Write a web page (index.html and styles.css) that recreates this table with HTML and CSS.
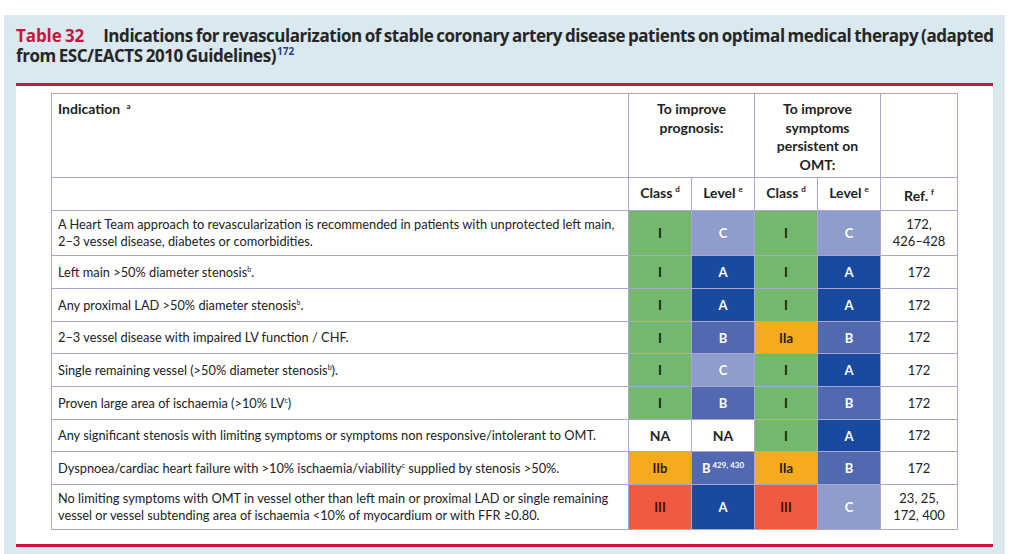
FILE: index.html
```html
<!DOCTYPE html>
<html>
<head>
<meta charset="utf-8">
<link rel="stylesheet" href="styles.css">
</head>
<body>
<div class="panel">
  <h1 class="title"><span class="tno">Table 32</span><span class="ttext">Indications for revascularization of stable coronary artery disease patients on optimal medical therapy (adapted<br>from ESC/EACTS 2010 Guidelines)<sup class="tref">172</sup></span></h1>
  <div class="rule"></div>
  <div class="box">
    <table class="tbl">
      <colgroup>
        <col class="c-ind"><col class="c-x"><col class="c-x"><col class="c-x"><col class="c-x"><col class="c-ref">
      </colgroup>
      <tr class="h1">
        <th class="ind">Indication <sup>a</sup></th>
        <th colspan="2" class="grp">To improve prognosis:</th>
        <th colspan="2" class="grp">To improve symptoms persistent on OMT:</th>
        <th></th>
      </tr>
      <tr class="h2">
        <th></th>
        <th class="sub">Class<sup>d</sup></th>
        <th class="sub">Level<sup>e</sup></th>
        <th class="sub">Class<sup>d</sup></th>
        <th class="sub">Level<sup>e</sup></th>
        <th class="sub refh">Ref.<sup>f</sup></th>
      </tr>
      <tr class="tall">
        <td class="txt">A Heart Team approach to revascularization is recommended in patients with unprotected left main,<br>2–3 vessel disease, diabetes or comorbidities.</td>
        <td class="k g">I</td><td class="k lc">C</td><td class="k g">I</td><td class="k lc">C</td><td class="ref">172,<br>426–428</td>
      </tr>
      <tr>
        <td class="txt">Left main &gt;50% diameter stenosis<sup>b</sup>.</td>
        <td class="k g">I</td><td class="k la">A</td><td class="k g">I</td><td class="k la">A</td><td class="ref">172</td>
      </tr>
      <tr>
        <td class="txt">Any proximal LAD &gt;50% diameter stenosis<sup>b</sup>.</td>
        <td class="k g">I</td><td class="k la">A</td><td class="k g">I</td><td class="k la">A</td><td class="ref">172</td>
      </tr>
      <tr class="short">
        <td class="txt">2–3 vessel disease with impaired LV function / CHF.</td>
        <td class="k g">I</td><td class="k lb">B</td><td class="k o">IIa</td><td class="k lb">B</td><td class="ref">172</td>
      </tr>
      <tr>
        <td class="txt">Single remaining vessel (&gt;50% diameter stenosis<sup>b</sup>).</td>
        <td class="k g">I</td><td class="k lc">C</td><td class="k g">I</td><td class="k la">A</td><td class="ref">172</td>
      </tr>
      <tr>
        <td class="txt">Proven large area of ischaemia (&gt;10% LV<sup>c</sup>)</td>
        <td class="k g">I</td><td class="k lb">B</td><td class="k g">I</td><td class="k lb">B</td><td class="ref">172</td>
      </tr>
      <tr class="short">
        <td class="txt">Any significant stenosis with limiting symptoms or symptoms non responsive/intolerant to OMT.</td>
        <td class="k na">NA</td><td class="k na">NA</td><td class="k g">I</td><td class="k la">A</td><td class="ref">172</td>
      </tr>
      <tr>
        <td class="txt">Dyspnoea/cardiac heart failure with &gt;10% ischaemia/viability<sup>c</sup> supplied by stenosis &gt;50%.</td>
        <td class="k o">IIb</td><td class="k lb">B<sup class="lsup">429, 430</sup></td><td class="k o">IIa</td><td class="k lb">B</td><td class="ref">172</td>
      </tr>
      <tr class="tall">
        <td class="txt">No limiting symptoms with OMT in vessel other than left main or proximal LAD or single remaining<br>vessel or vessel subtending area of ischaemia &lt;10% of myocardium or with FFR ≥0.80.</td>
        <td class="k r">III</td><td class="k la">A</td><td class="k r">III</td><td class="k lc">C</td><td class="ref">23, 25,<br>172, 400</td>
      </tr>
    </table>
  </div>
  <div class="rule"></div>
  <div class="foot"></div>
</div>
</body>
</html>
```

FILE: styles.css
```css
html, body {
  margin: 0;
  padding: 0;
  background: #ffffff;
}
body {
  font-family: Lato, "Open Sans", "Liberation Sans", sans-serif;
  color: #1f1f1f;
}
.panel {
  margin: 15px 0 0 4px;
  width: 977px;
  padding: 0 12px;
  background: #d9e9ef;
  height: 539px;
  display: flex;
  flex-direction: column;
}
.title {
  margin: 0;
  padding: 11px 0 0 0;
  height: 68px;
  box-sizing: border-box;
  font-family: "Open Sans", Lato, sans-serif;
  font-weight: 700;
  font-size: 17px;
  line-height: 20px;
  letter-spacing: -0.45px;
  word-spacing: -1px;
  white-space: nowrap;
  color: #262626;
}
.tno {
  color: #c5163f;
  margin-right: 19px;
  letter-spacing: -0.1px;
}
.tref {
  color: #2d3a8c;
  font-size: 10px;
  vertical-align: 7px;
  line-height: 0;
  letter-spacing: 0;
  margin-left: 1px;
}
.rule {
  height: 3px;
  background: #c6183f;
}
.box {
  background: #ffffff;
  padding: 7px 0 14px 35px;
}
.tbl {
  border-collapse: collapse;
  width: 906px;
  table-layout: fixed;
  font-size: 13px;
}
.c-ind { width: 577px; }
.c-x { width: 63px; }
.c-ref { width: 77px; }
.tbl th, .tbl td {
  border: 1px solid #a9a7d0;
  padding: 0;
}
.tbl th {
  font-weight: 700;
  font-size: 14px;
  color: #222;
  vertical-align: top;
}
.tbl tr { height: 33px; }
.tbl tr.h1 { height: 84px; }
.tbl tr.h2 { height: 33px; }
.tbl tr.tall { height: 45px; }
.tbl tr.short { height: 32px; }
.h1 th { padding-top: 6px; line-height: 18.5px; }
.ind {
  text-align: left;
  padding-left: 6px !important;
}
.ind sup {
  font-size: 8px;
  vertical-align: 5px;
  line-height: 0;
  margin-left: 3px;
}
.grp {
  text-align: center;
  padding-left: 17px !important;
  padding-right: 17px !important;
}
.sub {
  text-align: center;
  padding-top: 6px !important;
  line-height: 18px;
}
.sub sup {
  font-size: 8px;
  vertical-align: 6px;
  line-height: 0;
  margin-left: 3px;
}
.refh { padding-top: 9px !important; }
.txt {
  padding: 0 6px !important;
  line-height: 17px;
  font-size: 12.8px;
  color: #222;
  vertical-align: middle;
  white-space: nowrap;
  overflow: hidden;
}
.txt sup {
  font-size: 7px;
  vertical-align: 5px;
  line-height: 0;
}
.k {
  text-align: center;
  vertical-align: middle;
  font-weight: 700;
  font-size: 13px;
}
.g { background: #73b86c; color: #16260f; }
.lc { background: #8f9ccc; color: #ffffff; }
.la { background: #1a4a9f; color: #ffffff; }
.lb { background: #5069b1; color: #ffffff; }
.o { background: #f6aa1e; color: #2a1e05; }
.r { background: #ee5a3f; color: #3a1208; }
.na { background: #ffffff; color: #1f1f1f; font-size: 14px; }
.lsup {
  font-size: 8px;
  vertical-align: 5px;
  line-height: 0;
  margin-left: 2px;
}
.ref {
  text-align: center;
  vertical-align: middle;
  line-height: 17px;
  font-size: 13px;
  color: #222;
}
.foot {
  flex: 1;
}
```
